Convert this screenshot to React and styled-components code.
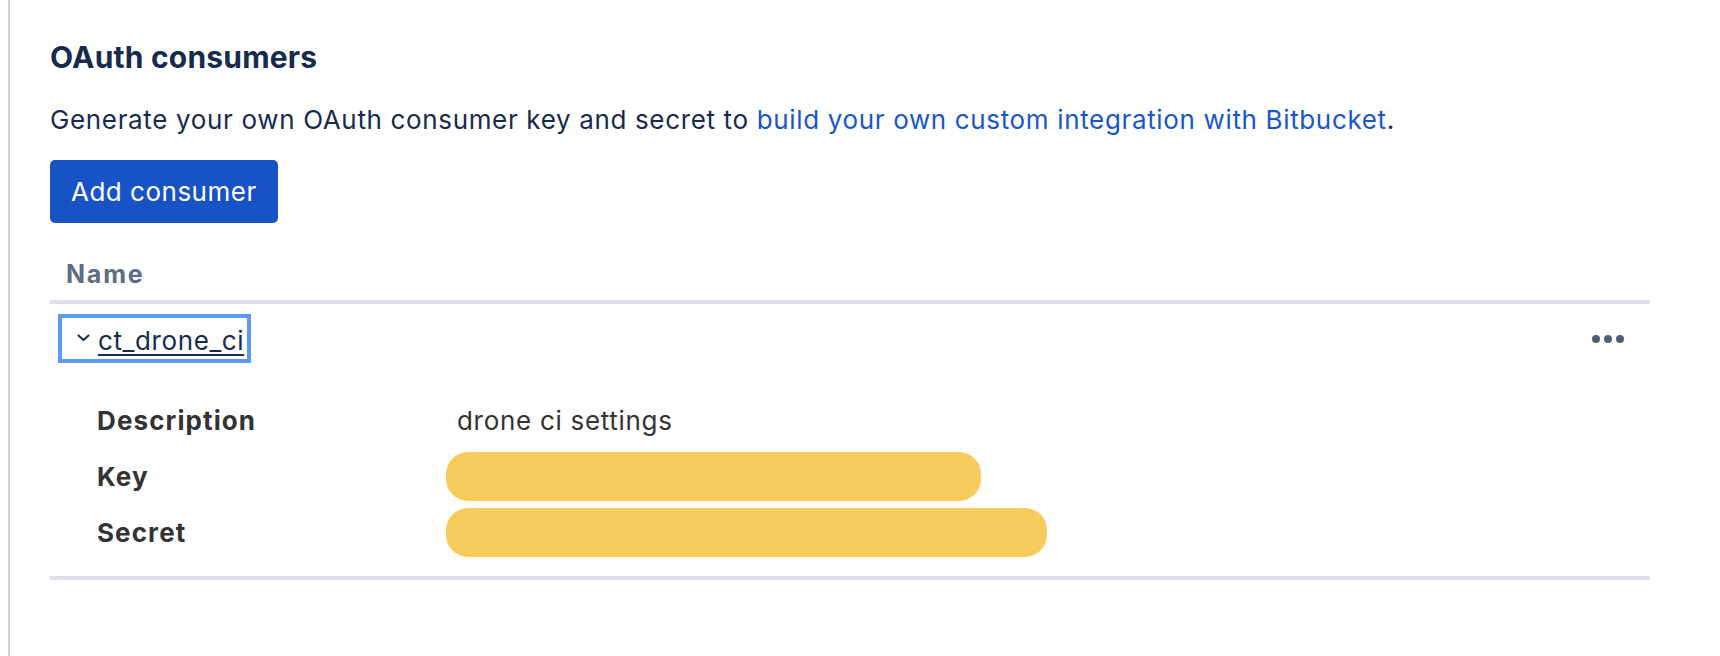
import React from 'react';
import styled, { createGlobalStyle } from 'styled-components';

const GlobalStyle = createGlobalStyle`
  html, body {
    margin:0;
    padding:0;
    background:#fff;
  }
  body {
    font-family:Inter, "Noto Sans", "Liberation Sans", sans-serif;
    color:#172b4d;
  }
`;

const Page = styled.div`
  display:flex;
  height:656px;
`;

const Main = styled.main`
  margin-left:8px;
  border-left:2px solid #d0d0d0;
  padding:39px 0 0 40px;
  flex-grow:1;
`;

const Content = styled.div`
  width:1600px;
`;

const Title = styled.h2`
  margin:0;
  font-size:30px;
  line-height:36px;
  font-weight:700;
  letter-spacing:0.2px;
  color:#172b4d;
`;

const Intro = styled.p`
  margin:29px 0 0;
  font-size:26px;
  line-height:32px;
  letter-spacing:0.65px;
  color:#172b4d;
`;

const IntroLink = styled.a`
  color:#1a56c9;
  text-decoration:none;
`;

const Button = styled.button`
  margin-top:24px;
  height:63px;
  padding:0 21px;
  border:none;
  border-radius:5px;
  background:#1853c6;
  color:#fff;
  font-family:inherit;
  font-size:26px;
  letter-spacing:0.5px;
  cursor:pointer;
`;

const HeaderCell = styled.div`
  margin-top:37px;
  padding:0 0 12px 16px;
  font-size:25px;
  line-height:28px;
  font-weight:700;
  letter-spacing:1.8px;
  color:#5e6c84;
  border-bottom:4px solid #dfe1e6;
`;

const ConsumerRow = styled.div`
  display:flex;
  align-items:center;
  justify-content:space-between;
  padding:10px 26px 0 8px;
`;

const Toggle = styled.a`
  display:flex;
  align-items:center;
  border:4px solid #5b9bf5;
  padding:6px 3px 2px 15px;
  font-size:26px;
  line-height:33px;
  letter-spacing:0.6px;
  color:#172b4d;
  text-decoration:underline;
  text-decoration-thickness:2px;
  text-underline-offset:4px;
  cursor:pointer;
`;

const Chevron = styled.svg`
  width:13px;
  height:8px;
  margin:0 8px 5px 0;
`;

const Dots = styled.div`
  display:flex;
  gap:4px;
`;

const Dot = styled.span`
  width:8px;
  height:8px;
  border-radius:50%;
  background:#505f79;
`;

const Details = styled.dl`
  display:grid;
  grid-template-columns:360px 1fr;
  grid-auto-rows:56px;
  align-items:center;
  margin:29px 0 0;
  padding:0 0 16px 47px;
  border-bottom:4px solid #dfe1e6;
  font-size:26px;
  color:#333;
`;

const Label = styled.dt`
  font-weight:700;
  letter-spacing:1.1px;
`;

const Value = styled.dd`
  margin:0;
  letter-spacing:0.7px;
`;

const Redacted = styled.div`
  margin-left:-11px;
  width:${p => p.$width}px;
  height:49px;
  border-radius:22px;
  background:#f7cb5c;
`;

export default function App() {
  return (
    <>
      <GlobalStyle />
      <Page>
        <Main>
          <Content>
            <Title>OAuth consumers</Title>
            <Intro>
              Generate your own OAuth consumer key and secret to{' '}
              <IntroLink href="#">build your own custom integration with Bitbucket</IntroLink>.
            </Intro>
            <Button>Add consumer</Button>
            <HeaderCell>Name</HeaderCell>
            <ConsumerRow>
              <Toggle>
                <Chevron viewBox="0 0 13 8">
                  <polyline points="1.5,1.5 6.5,6 11.5,1.5" fill="none" stroke="#172b4d" strokeWidth="2" strokeLinecap="round" strokeLinejoin="round" />
                </Chevron>
                ct_drone_ci
              </Toggle>
              <Dots>
                <Dot />
                <Dot />
                <Dot />
              </Dots>
            </ConsumerRow>
            <Details>
              <Label>Description</Label>
              <Value>drone ci settings</Value>
              <Label>Key</Label>
              <Value><Redacted $width={535} /></Value>
              <Label>Secret</Label>
              <Value><Redacted $width={601} /></Value>
            </Details>
          </Content>
        </Main>
      </Page>
    </>
  );
}
